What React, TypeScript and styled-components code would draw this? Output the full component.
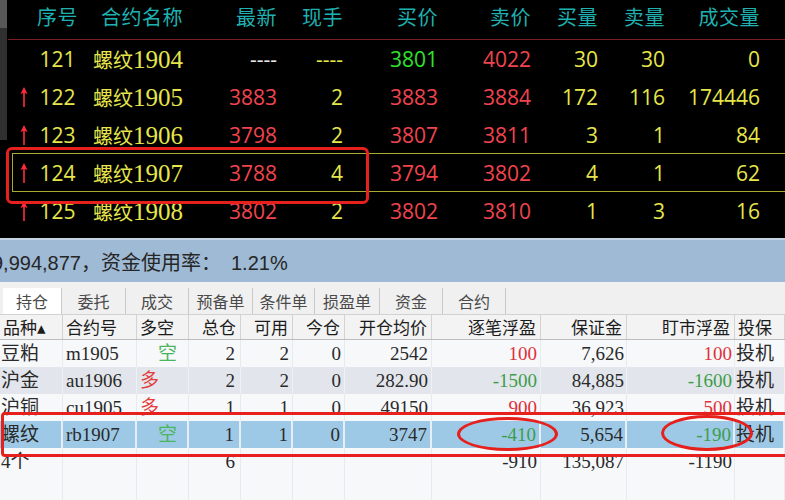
import React from 'react';
import styled, { createGlobalStyle, css } from 'styled-components';

const GlobalStyle = createGlobalStyle`
  html, body {
    margin: 0;
    padding: 0;
    background: #f4f6f9;
  }
  body {
    width: 785px;
    height: 500px;
    overflow: hidden;
  }
`;

const YELLOW = '#e6e64c';
const RED = '#f0444e';
const GREEN = '#2fe22f';
const WHITE = '#e8e8e8';
const CYAN = '#1fb1b1';

const Page = styled.div`
  position: relative;
  width: 785px;
  height: 500px;
  overflow: hidden;
  display: flex;
  flex-direction: column;
  font-family: 'Noto Sans CJK SC', sans-serif;
`;

/* ---------- quote board ---------- */

const Quote = styled.div`
  display: flex;
  flex-shrink: 0;
  height: 238px;
  background: #000;
`;

const SideStrip = styled.div`
  width: 7px;
  margin-right: 1px;
  background: linear-gradient(#575757 0 28px, #303030 28px 140px, #000 140px);
`;

const QuoteTable = styled.div`
  flex: 1;
  display: flex;
  flex-direction: column;
`;

const quoteCols = '24px 52px 100px 94px 66px 95px 93px 67px 67px 95px 1fr';

const QuoteHead = styled.div`
  display: grid;
  grid-template-columns: ${quoteCols};
  align-items: center;
  height: 40px;
  padding-bottom: 6px;
  box-sizing: border-box;
  border-bottom: 1px solid #7c1f22;
  color: ${CYAN};
  font-size: 20px;
  letter-spacing: 0.5px;
`;

const QuoteRow = styled.div<{ $selected?: boolean }>`
  position: relative;
  display: grid;
  grid-template-columns: ${quoteCols};
  align-items: center;
  height: 38px;
  font-family: 'Open Sans', 'Noto Sans CJK SC', sans-serif;
  font-size: 21px;

  ${p =>
    p.$selected &&
    css`
      &::after {
        content: '';
        position: absolute;
        left: 4px;
        right: 0;
        top: -1px;
        bottom: 0;
        border: 1px solid #aaa930;
        border-right: none;
      }
    `}
`;

const QCell = styled.div<{ $color?: string; $align?: string }>`
  color: ${p => p.$color || YELLOW};
  text-align: ${p => p.$align || 'right'};
  padding-right: 1px;
  white-space: nowrap;
`;

const NameText = styled.span`
  font-family: 'Noto Sans CJK SC', sans-serif;
  font-size: 20px;
`;

const NameCode = styled.span`
  font-family: 'Liberation Serif', serif;
  font-size: 25px;
`;

const ArrowBox = styled.div`
  display: flex;
  justify-content: center;
  padding-left: 7px;
`;

const UpArrow = () => (
  <svg width="10" height="22" viewBox="0 0 10 22">
    <path d="M5 1 L1.5 8 L4.2 7 L4.2 21 L5.8 21 L5.8 7 L8.5 8 Z" fill="#ff2b3c" />
  </svg>
);

/* ---------- fund bar & tabs ---------- */

const FundBar = styled.div`
  flex-shrink: 0;
  height: 42px;
  border-top: 2px solid #c4d3e2;
  background: #9fbad5;
  display: flex;
  align-items: center;
  overflow: hidden;
  white-space: nowrap;
  font-family: 'Liberation Sans', 'Noto Sans CJK SC', sans-serif;
  font-size: 20px;
  color: #262626;
`;

const FundText = styled.span`
  margin-left: -8px;
`;

const FundRate = styled.span`
  margin-left: 10px;
`;

const TabStrip = styled.div`
  flex-shrink: 0;
  height: 32px;
  background: #f0f0f0;
  display: flex;
  align-items: flex-end;
  padding-left: 3px;
  box-sizing: border-box;
`;

const Tab = styled.div<{ $active?: boolean; $w: number }>`
  width: ${p => p.$w}px;
  height: 26px;
  display: flex;
  align-items: center;
  justify-content: center;
  box-sizing: border-box;
  border-right: 1px solid #c8c8c8;
  background: ${p => (p.$active ? '#fff' : 'transparent')};
  color: #4a4a4a;
  font-size: 16px;
`;

/* ---------- position grid ---------- */

const posCols = '63px 74px 52px 52px 52px 52px 87px 109px 86px 108px 1fr';

const HeadRow = styled.div`
  flex-shrink: 0;
  display: grid;
  grid-template-columns: ${posCols};
  height: 24px;
  background: #f3f3f3;
  border-top: 1px solid #d2d2d2;
  border-bottom: 1px solid #bcbcbc;
`;

const HeadCell = styled.div<{ $align?: string }>`
  padding: 0 4px 0 3px;
  border-right: 1px solid #d3d3d3;
  text-align: ${p => p.$align || 'right'};
  line-height: 23px;
  font-size: 17px;
  color: #1c1c1c;
  white-space: nowrap;
  overflow: hidden;
`;

type RowKind = 'plain' | 'alt' | 'selected';

const rowBg: Record<RowKind, string> = {
  plain: '#f7f8fa',
  alt: '#e2e6ec',
  selected: '#9ec9e6',
};

const rowLine: Record<RowKind, string> = {
  plain: '1px solid #e7eaef',
  alt: '1px solid #eef0f4',
  selected: '2px solid #e6eef6',
};

const PosRow = styled.div<{ $kind: RowKind }>`
  flex-shrink: 0;
  display: grid;
  grid-template-columns: ${posCols};
  height: 27px;
  background: ${p => rowBg[p.$kind]};
  font-family: 'Liberation Serif', 'Noto Sans CJK SC', serif;
  font-size: 19px;
  color: #2a2a2a;
`;

const PosCell = styled.div<{ $kind: RowKind; $align?: string; $color?: string; $pad?: number }>`
  border-right: ${p => rowLine[p.$kind]};
  text-align: ${p => p.$align || 'right'};
  padding: ${p => (p.$align === 'left' ? `0 0 0 ${p.$pad ?? 2}px` : `0 ${p.$pad ?? 3}px 0 0`)};
  line-height: 27px;
  color: ${p => p.$color || 'inherit'};
  white-space: nowrap;
  overflow: hidden;
`;

/* ---------- red annotations ---------- */

const Mark = styled.div<{ $round?: boolean }>`
  position: absolute;
  border: 3px solid #e5201d;
  border-radius: ${p => (p.$round ? '50%' : '6px')};
  pointer-events: none;
`;

const quotes = [
  { no: 121, name: '1904', last: ['----', WHITE], hand: '----', bid: ['3801', GREEN], ask: '4022', bq: '30', aq: '30', vol: '0', up: false },
  { no: 122, name: '1905', last: ['3883', RED], hand: '2', bid: ['3883', RED], ask: '3884', bq: '172', aq: '116', vol: '174446', up: true },
  { no: 123, name: '1906', last: ['3798', RED], hand: '2', bid: ['3807', RED], ask: '3811', bq: '3', aq: '1', vol: '84', up: true },
  { no: 124, name: '1907', last: ['3788', RED], hand: '4', bid: ['3794', RED], ask: '3802', bq: '4', aq: '1', vol: '62', up: true },
  { no: 125, name: '1908', last: ['3802', RED], hand: '2', bid: ['3802', RED], ask: '3810', bq: '1', aq: '3', vol: '16', up: true },
];

const tabs = [
  ['持仓', 59],
  ['委托', 64],
  ['成交', 63],
  ['预备单', 64],
  ['条件单', 62],
  ['损盈单', 65],
  ['资金', 63],
  ['合约', 63],
] as const;

const heads: [string, string?][] = [
  ['品种▴', 'left'],
  ['合约号', 'left'],
  ['多空', 'left'],
  ['总仓'],
  ['可用'],
  ['今仓'],
  ['开仓均价'],
  ['逐笔浮盈'],
  ['保证金'],
  ['盯市浮盈'],
  ['投保', 'left'],
];

const PR = '#e0303a';
const PG = '#3d9d4a';

type Pos = {
  kind: RowKind;
  v: string[];
  side?: 'long' | 'short';
  c1?: string;
  c2?: string;
};

const positions: Pos[] = [
  { kind: 'plain', v: ['豆粕', 'm1905', '空', '2', '2', '0', '2542', '100', '7,626', '100', '投机'], side: 'short', c1: PR, c2: PR },
  { kind: 'alt', v: ['沪金', 'au1906', '多', '2', '2', '0', '282.90', '-1500', '84,885', '-1600', '投机'], side: 'long', c1: PG, c2: PG },
  { kind: 'plain', v: ['沪铜', 'cu1905', '多', '1', '1', '0', '49150', '900', '36,923', '500', '投机'], side: 'long', c1: PR, c2: PR },
  { kind: 'selected', v: ['螺纹', 'rb1907', '空', '1', '1', '0', '3747', '-410', '5,654', '-190', '投机'], side: 'short', c1: PG, c2: PG },
  { kind: 'plain', v: ['4个', '', '', '6', '', '', '', '-910', '135,087', '-1190', ''] },
  { kind: 'plain', v: ['', '', '', '', '', '', '', '', '', '', ''] },
];

function PositionRow({ p }: { p: Pos }) {
  const k = p.kind;
  return (
    <PosRow $kind={k}>
      <PosCell $kind={k} $align="left" $pad={1}>{p.v[0]}</PosCell>
      <PosCell $kind={k} $align="left" $pad={3}>{p.v[1]}</PosCell>
      <PosCell
        $kind={k}
        $align="left"
        $pad={p.side === 'short' ? 21 : 3}
        $color={p.side === 'short' ? '#4cb45c' : '#e33a3a'}
      >
        {p.v[2]}
      </PosCell>
      <PosCell $kind={k} $pad={5}>{p.v[3]}</PosCell>
      <PosCell $kind={k} $pad={3}>{p.v[4]}</PosCell>
      <PosCell $kind={k} $pad={3}>{p.v[5]}</PosCell>
      <PosCell $kind={k} $pad={3}>{p.v[6]}</PosCell>
      <PosCell $kind={k} $pad={3} $color={p.c1}>{p.v[7]}</PosCell>
      <PosCell $kind={k} $pad={2}>{p.v[8]}</PosCell>
      <PosCell $kind={k} $pad={2} $color={p.c2}>{p.v[9]}</PosCell>
      <PosCell $kind={k} $align="left" $pad={1}>{p.v[10]}</PosCell>
    </PosRow>
  );
}

export default function App() {
  return (
    <Page>
      <GlobalStyle />
      <Quote>
        <SideStrip />
        <QuoteTable>
          <QuoteHead>
            <QCell $color={CYAN} />
            <QCell $color={CYAN} $align="center">序号</QCell>
            <QCell $color={CYAN}>合约名称</QCell>
            <QCell $color={CYAN}>最新</QCell>
            <QCell $color={CYAN}>现手</QCell>
            <QCell $color={CYAN}>买价</QCell>
            <QCell $color={CYAN}>卖价</QCell>
            <QCell $color={CYAN}>买量</QCell>
            <QCell $color={CYAN}>卖量</QCell>
            <QCell $color={CYAN}>成交量</QCell>
          </QuoteHead>
          {quotes.map(q => (
            <QuoteRow key={q.no} $selected={q.no === 124}>
              <ArrowBox>{q.up && <UpArrow />}</ArrowBox>
              <QCell $align="center">{q.no}</QCell>
              <QCell>
                <NameText>螺纹</NameText>
                <NameCode>{q.name}</NameCode>
              </QCell>
              <QCell $color={q.last[1]}>{q.last[0]}</QCell>
              <QCell>{q.hand}</QCell>
              <QCell $color={q.bid[1]}>{q.bid[0]}</QCell>
              <QCell $color={RED}>{q.ask}</QCell>
              <QCell>{q.bq}</QCell>
              <QCell>{q.aq}</QCell>
              <QCell>{q.vol}</QCell>
            </QuoteRow>
          ))}
        </QuoteTable>
      </Quote>

      <FundBar>
        <FundText>
          9,994,877，资金使用率：<FundRate>1.21%</FundRate>
        </FundText>
      </FundBar>

      <TabStrip>
        {tabs.map(([t, w], i) => (
          <Tab key={t} $w={w} $active={i === 0}>
            {t}
          </Tab>
        ))}
      </TabStrip>

      <HeadRow>
        {heads.map(([h, a]) => (
          <HeadCell key={h} $align={a}>
            {h}
          </HeadCell>
        ))}
      </HeadRow>

      {positions.map((p, i) => (
        <PositionRow key={i} p={p} />
      ))}

      <Mark style={{ left: 6, top: 147, width: 357, height: 51 }} />
      <Mark style={{ left: 1, top: 412, width: 783, height: 39, borderRadius: 4 }} />
      <Mark $round style={{ left: 457, top: 417, width: 95, height: 28 }} />
      <Mark $round style={{ left: 661, top: 415, width: 86, height: 30 }} />
    </Page>
  );
}
